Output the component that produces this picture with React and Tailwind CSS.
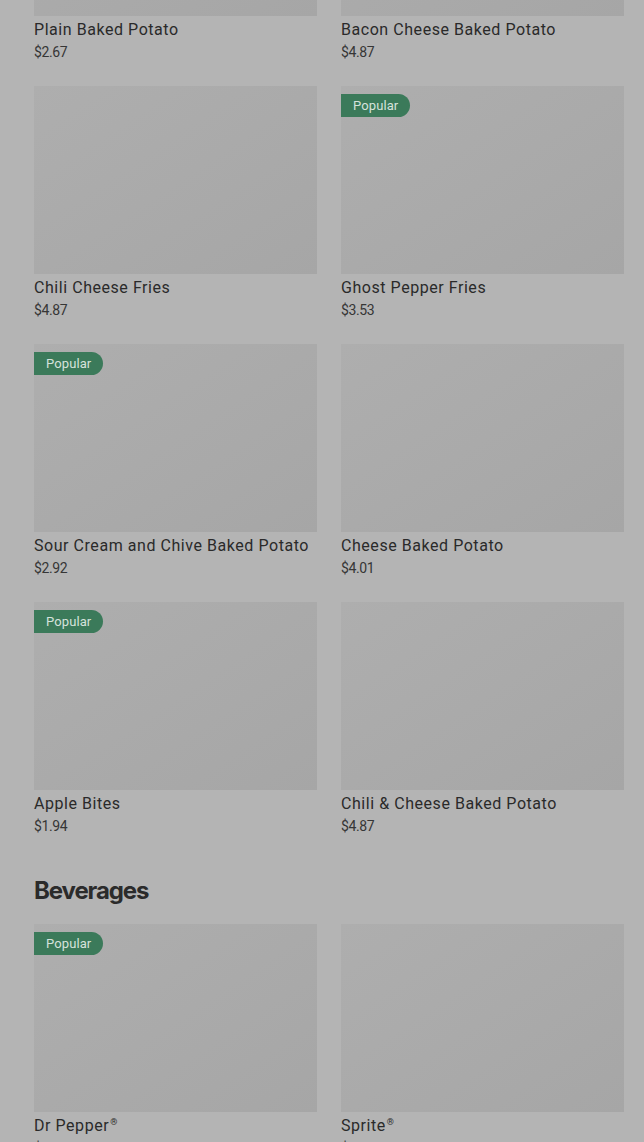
import React from "react";

const sides = [
    { name: "Plain Baked Potato", price: "$2.67" },
    { name: "Bacon Cheese Baked Potato", price: "$4.87" },
    { name: "Chili Cheese Fries", price: "$4.87" },
    { name: "Ghost Pepper Fries", price: "$3.53", popular: true },
    { name: "Sour Cream and Chive Baked Potato", price: "$2.92", popular: true },
    { name: "Cheese Baked Potato", price: "$4.01" },
    { name: "Apple Bites", price: "$1.94", popular: true },
    { name: "Chili & Cheese Baked Potato", price: "$4.87" },
];

const beverages = [
    { name: "Dr Pepper", reg: true, price: "$2.19", popular: true },
    { name: "Sprite", reg: true, price: "$2.19" },
];

function MenuItem({ item }) {
    return (
        <article className="flex flex-col">
            <div className="relative h-[188px] bg-gradient-to-br from-[#aeaeae] to-[#a6a6a6]">
                {item.popular && (
                    <span className="absolute left-0 top-[8px] rounded-r-full bg-[#3b7a5a] py-[2px] pl-[12px] pr-[12px] text-[13px] leading-[19px] tracking-[0.1px] text-[#d6e2dc]">
                        Popular
                    </span>
                )}
            </div>
            <h3 className="mt-[2px] text-[16px] font-normal leading-[24px] tracking-[0.55px] text-[#2a2a2a]">
                {item.name}
                {item.reg && <span className="relative top-[-6px] ml-[1px] text-[9px] leading-none">®</span>}
            </h3>
            <p className="text-[14px] leading-[20px] tracking-[-0.4px] text-[#363636]">{item.price}</p>
        </article>
    );
}

export default function App() {
    return (
        <div className="min-h-screen overflow-hidden bg-[#b4b4b4] pl-[34px] pr-[20px] pb-10" style={{ fontFamily: "Roboto, 'Noto Sans', sans-serif" }}>
            <div className="-mt-[172px] grid grid-cols-2 gap-x-[24px] gap-y-[24px]">
                {sides.map((item) => (
                    <MenuItem key={item.name} item={item} />
                ))}
            </div>
            <section className="mt-[39px]">
                <h2 className="mb-[17px] text-[24px] font-bold leading-[32px] tracking-[-1.1px] text-[#2b2b2b]" style={{ fontFamily: "Inter, sans-serif" }}>
                    Beverages
                </h2>
                <div className="grid grid-cols-2 gap-x-[24px] gap-y-[24px]">
                    {beverages.map((item) => (
                        <MenuItem key={item.name} item={item} />
                    ))}
                </div>
            </section>
        </div>
    );
}
